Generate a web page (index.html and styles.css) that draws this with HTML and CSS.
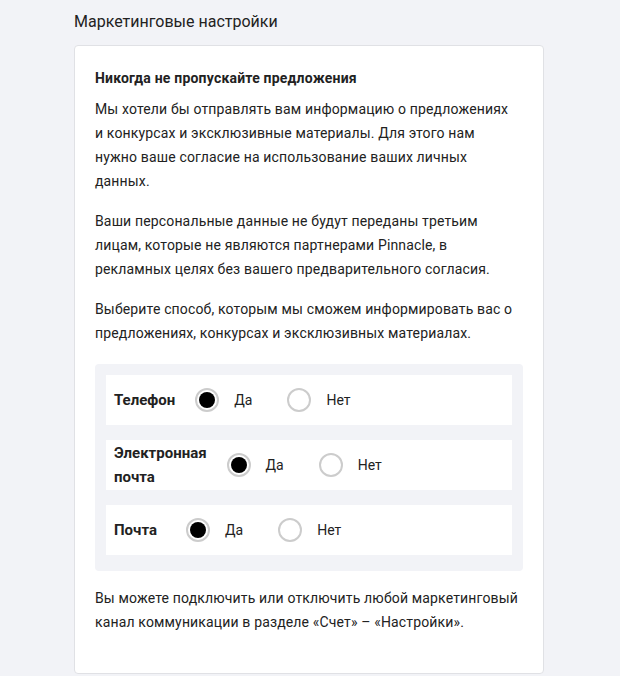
FILE: index.html
```html
<!DOCTYPE html>
<html lang="ru">
<head>
    <meta charset="UTF-8">
    <meta name="viewport" content="width=device-width, initial-scale=1.0">
    <title>Маркетинговые настройки</title>
    <link rel="stylesheet" href="styles.css">
</head>
<body>
    <div class="page">
        <h1>Маркетинговые настройки</h1>
        <div class="card">
            <h2>Никогда не пропускайте предложения</h2>
            <p>Мы хотели бы отправлять вам информацию о предложениях и&nbsp;конкурсах и эксклюзивные материалы. Для этого нам нужно ваше согласие на использование ваших личных данных.</p>
            <p>Ваши персональные данные не будут переданы третьим лицам, которые не являются партнерами Pinnacle, в рекламных целях без вашего предварительного согласия.</p>
            <p class="choose">Выберите способ, которым мы сможем информировать вас о предложениях, конкурсах и эксклюзивных материалах.</p>

            <div class="channels">
                <div class="channel">
                    <span class="channel-label">Телефон</span>
                    <label class="option"><input type="radio" name="phone" checked> Да</label>
                    <label class="option"><input type="radio" name="phone"> Нет</label>
                </div>
                <div class="channel">
                    <span class="channel-label">Электронная почта</span>
                    <label class="option"><input type="radio" name="email" checked> Да</label>
                    <label class="option"><input type="radio" name="email"> Нет</label>
                </div>
                <div class="channel">
                    <span class="channel-label">Почта</span>
                    <label class="option"><input type="radio" name="post" checked> Да</label>
                    <label class="option"><input type="radio" name="post"> Нет</label>
                </div>
            </div>

            <p class="note">Вы можете подключить или отключить любой маркетинговый канал коммуникации в разделе «Счет» – «Настройки».</p>
        </div>
    </div>
</body>
</html>
```

FILE: styles.css
```css
body {
    font-family: Roboto, "Noto Sans", sans-serif;
    background-color: #f2f3f7;
    color: #222;
    margin: 0;
    padding: 0;
}

.page {
    width: 470px;
    margin-left: 74px;
    padding-top: 10px;
}

h1 {
    font-size: 16px;
    font-weight: 400;
    line-height: 24px;
    margin: 0 0 11px;
}

.card {
    background-color: #fff;
    border: 1px solid #e0e1e5;
    border-radius: 4px;
    padding: 20px 20px 39px;
}

h2 {
    font-size: 14px;
    font-weight: 700;
    line-height: 24px;
    letter-spacing: 0.2px;
    margin: 0 0 7px;
}

p {
    font-size: 14px;
    line-height: 24px;
    letter-spacing: 0.15px;
    margin: 0 4px 16px 0;
}

.choose {
    margin-bottom: 19px;
}

.channels {
    background-color: #f2f3f7;
    border-radius: 4px;
    padding: 11px 11px 16px;
    display: flex;
    flex-direction: column;
    gap: 15px;
}

.channel {
    height: 50px;
    background-color: #fff;
    display: flex;
    align-items: center;
    padding: 0 8px;
    font-size: 14px;
}

.channel-label {
    font-size: 15px;
    font-weight: 700;
    line-height: 24px;
    width: min-content;
    min-width: 52px;
    margin-right: 20px;
}

.option {
    display: flex;
    align-items: center;
    margin-right: 35px;
    cursor: pointer;
}

.option input {
    appearance: none;
    -webkit-appearance: none;
    width: 24px;
    height: 24px;
    margin: 0 15px 0 0;
    border: 2px solid #ccc;
    border-radius: 50%;
    box-sizing: border-box;
    background-color: #fff;
    display: flex;
    align-items: center;
    justify-content: center;
}

.option input:checked::after {
    content: "";
    width: 16px;
    height: 16px;
    border-radius: 50%;
    background-color: #000;
}

.note {
    margin-top: 15px;
    margin-bottom: 0;
}
```
